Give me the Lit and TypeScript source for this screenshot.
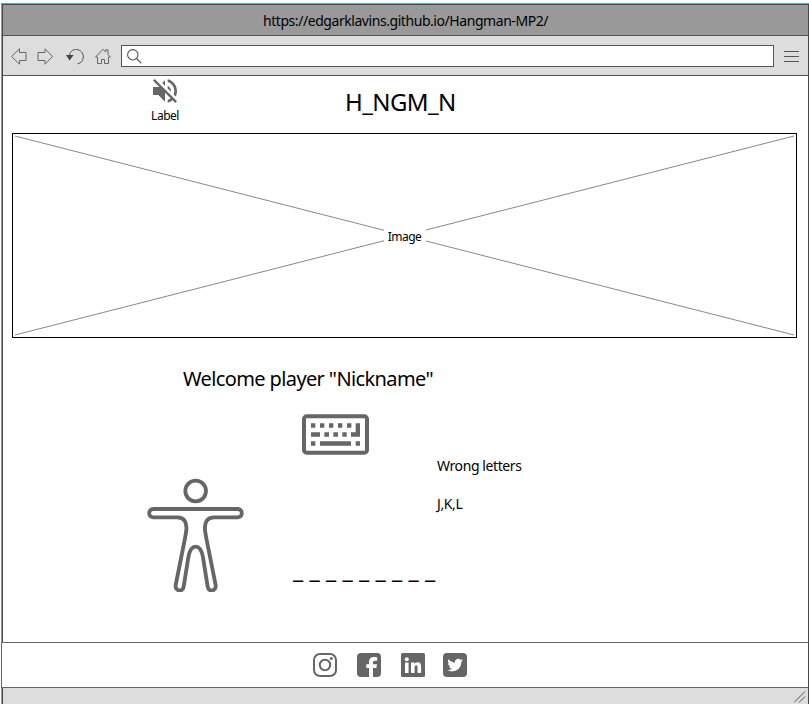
import { LitElement, html, css } from "lit";
import { customElement } from "lit/decorators.js";

const body = "M40 117H293a12.5 12.5 0 0 1 0 25H222C202 142 193 156 195 180Q196 190 199 205L227 345C230 364 206 368 203 350L189 262C185 240 177 230 167 230C157 230 149 240 145 262L131 350C128 368 104 364 107 345L135 205Q138 190 139 180C141 156 132 142 112 142H40a12.5 12.5 0 0 1 0 -25Z";

@customElement("browser-toolbar")
class BrowserToolbar extends LitElement {
  static styles = css`
    :host { display: flex; align-items: flex-start; height: 39px; background: #ddd; border-bottom: 1px solid #555; }
    svg { display: block; flex: none; fill: none; stroke: #666; stroke-width: 1; }
    .nav { display: flex; width: 118px; box-sizing: border-box; padding: 12px 0 0 8px; }
    .forward { margin-left: 10px; }
    .undo { margin-left: 13px; stroke: #555; }
    .home { margin-left: 10px; }
    .arrowhead { fill: #444; stroke: none; }
    .address { box-sizing: border-box; width: 653px; height: 22px; margin-top: 9px; border: 1px solid #555; background: #fff; padding: 3px 0 0 5px; }
    .address svg { stroke: #555; stroke-width: 1.1; }
    .menu { margin: 15px 0 0 10px; shape-rendering: crispEdges; stroke: #555; }
  `;
  render() {
    return html`
      <div class="nav">
        <svg width="16" height="17"><path d="M.5 8.5L8.5 .8V4.5H15V12.5H8.5V16.2Z" /></svg>
        <svg class="forward" width="16" height="17"><path d="M15.5 8.5L8 .8V4.5H1V12.5H8V16.2Z" /></svg>
        <svg class="undo" width="19" height="17"><path d="M3.5 7C4.5 3 7.5 1.2 10.5 1.5C14.5 1.8 17.5 5 17.3 9C17 12.5 15 15.5 11.5 15.8" /><path class="arrowhead" d="M0 7H7.6L3.6 12.5Z" /></svg>
        <svg class="home" width="16" height="17"><path d="M.6 9L8 1.2L10.7 4V1.8H13V6.5L15.4 9H13.5V15.5H9.5V11.5H6.5V15.5H2.5V9Z" /></svg>
      </div>
      <div class="address"><svg width="15" height="15"><circle cx="5.8" cy="5.8" r="5.2" /><path d="M9.5 9.5L14.3 14.3" /></svg></div>
      <svg class="menu" width="15" height="12"><path d="M0 .5H15M0 5.5H15M0 10.5H15" /></svg>
    `;
  }
}

@customElement("social-links")
class SocialLinks extends LitElement {
  static styles = css`
    :host { display: flex; padding: 10px 0 0 311px; height: 34px; }
    svg { display: block; flex: none; fill: #666; margin-right: 20px; }
    .twitter { margin-left: -2px; }
    .cut { fill: #fff; }
    .line { fill: none; stroke: #666; stroke-width: 2; }
  `;
  render() {
    return html`
      <svg width="24" height="24"><rect class="line" x="1" y="1" width="22" height="22" rx="6" /><circle class="line" cx="12" cy="12" r="5.2" /><circle cx="18.3" cy="5.6" r="1.5" /></svg>
      <svg width="24" height="24"><rect width="24" height="24" rx="4" /><path class="cut" d="M12 24V15H9.3V11.2H12V9.2C12 5.8 13.8 4.1 16.8 4.1C18.2 4.1 19.3 4.2 20.2 4.4V7.8H18C16.4 7.8 16 8.5 16 9.8V11.2H20L19.4 15H16V24Z" /></svg>
      <svg width="24" height="24"><rect width="24" height="24" rx="1.5" /><circle class="cut" cx="5.8" cy="6.2" r="2" /><path class="cut" d="M4 9.5H7.6V20H4ZM10 9.5H13.4V11C14 9.9 15.2 9.2 16.6 9.2C19.4 9.2 20.1 11.2 20.1 13.9V20H16.5V14.6C16.5 13.2 16.3 12.2 15.2 12.2C13.9 12.2 13.6 13.3 13.6 14.5V20H10Z" /></svg>
      <svg class="twitter" width="24" height="24"><rect width="24" height="24" rx="4" /><path class="cut" transform="translate(4.3 4.3) scale(.65)" d="M23.953 4.57a10 10 0 01-2.825.775 4.958 4.958 0 002.163-2.723c-.951.555-2.005.959-3.127 1.184a4.92 4.92 0 00-8.384 4.482C7.69 8.095 4.067 6.13 1.64 3.162a4.822 4.822 0 00-.666 2.475c0 1.71.87 3.213 2.188 4.096a4.904 4.904 0 01-2.228-.616v.06a4.923 4.923 0 003.946 4.827 4.996 4.996 0 01-2.212.085 4.936 4.936 0 004.604 3.417 9.867 9.867 0 01-6.102 2.105c-.39 0-.779-.023-1.17-.067a13.995 13.995 0 007.557 2.209c9.053 0 13.998-7.496 13.998-13.985 0-.21 0-.42-.015-.63A9.935 9.935 0 0024 4.59z" /></svg>
    `;
  }
}

@customElement("app-root")
class AppRoot extends LitElement {
  static styles = css`
    :host { display: block; box-sizing: border-box; width: 809px; height: 704px; padding: 3px 0 0 1px; overflow: hidden; background: #fdfdfb; color: #000; font-family: "Noto Sans", "Open Sans", sans-serif; }
    svg { display: block; }
    .window { box-sizing: border-box; height: 701px; border-top: 1px solid #48b4c4; border-left: 1px solid #48b4c4; }
    .frame { box-sizing: border-box; height: 700px; border: 1px solid #484848; border-bottom: 0; background: #fff; }
    .title { height: 30px; border-bottom: 1px solid #555; background: #999; line-height: 31px; font-size: 14px; text-align: center; letter-spacing: -.44px; white-space: nowrap; }
    .top { display: flex; height: 57px; }
    .sound { width: 60px; margin-left: 132px; padding-top: 3px; text-align: center; font-size: 12px; line-height: 16px; letter-spacing: -.5px; }
    .sound svg { margin: 0 auto 5px; fill: #666; }
    h1 { margin: 10px 0 0 150px; font-size: 24px; line-height: 32px; font-weight: 400; white-space: nowrap; letter-spacing: -.6px; }
    .image { box-sizing: border-box; width: 785px; height: 205px; margin-left: 9px; border: 1px solid #000; display: grid; place-items: center; }
    .image > * { grid-area: 1 / 1; }
    .image svg { stroke: #888; }
    .caption { z-index: 1; background: #fff; width: 42px; height: 16px; font-size: 12px; line-height: 18px; text-align: center; letter-spacing: -.5px; }
    .game { height: 304px; box-sizing: border-box; padding: 27px 0 0 144px; }
    h2 { margin: 0 0 -1px 36px; font-size: 20px; line-height: 28px; font-weight: 400; letter-spacing: -.62px; white-space: nowrap; }
    .board { display: grid; grid-template-columns: 146px 144px auto; }
    .figure { padding-top: 86px; }
    .figure svg { fill: none; stroke: #666; stroke-width: 11.5; }
    .keyboard { margin: 22px 0 0 9px; fill: #666; }
    .word { margin-top: 98px; font-size: 23px; line-height: 32px; letter-spacing: .15px; white-space: nowrap; }
    .wrong { padding-top: 64px; font-size: 14px; line-height: 20px; letter-spacing: -.4px; }
    .wrong p { margin: 0 0 18px; }
    .footer { box-sizing: border-box; height: 46px; margin-left: -2px; border: solid #666; border-width: 1px 0 1px 1px; background: #fff; }
    .status { display: flex; justify-content: flex-end; height: 16px; background: #ddd; }
    .grip { stroke: #555; margin: 2px 2px 0 0; }
  `;
  render() {
    return html`
      <div class="window"><div class="frame">
        <div class="title">https://edgarklavins.github.io/Hangman-MP2/</div>
        <browser-toolbar></browser-toolbar>
        <div class="top">
          <div class="sound">
            <svg width="24" height="24" viewBox="3 3 18 18"><path d="M16.5 12c0-1.77-1.02-3.29-2.5-4.03v2.21l2.45 2.45c.03-.2.05-.41.05-.63zm2.5 0c0 .94-.2 1.82-.54 2.64l1.51 1.51C20.63 14.91 21 13.5 21 12c0-4.28-2.99-7.86-7-8.77v2.06c2.89.86 5 3.54 5 6.71zM4.27 3L3 4.27 7.73 9H3v6h4l5 5v-6.73l4.25 4.25c-.67.52-1.42.93-2.25 1.18v2.06c1.38-.31 2.63-.95 3.69-1.81L19.73 21 21 19.73l-9-9L4.27 3zM12 4L9.91 6.09 12 8.18V4z" /></svg>
            Label
          </div>
          <h1>H_NGM_N</h1>
        </div>
        <div class="image">
          <svg width="783" height="203"><path d="M2 2L781 201M781 2L2 201" /></svg>
          <div class="caption">Image</div>
        </div>
        <div class="game">
          <h2>Welcome player "Nickname"</h2>
          <div class="board">
            <div class="figure"><svg width="97" height="114" viewBox="21 24 291 342"><circle cx="167" cy="63" r="31" /><path d=${body} /></svg></div>
            <div>
              <svg class="keyboard" width="67" height="41" viewBox="36 42 201 123"><rect x="42" y="49" width="189" height="109" rx="8" fill="none" stroke="#666" stroke-width="12" /><path d="M63 70h13v13h-13zM90 70h13v13h-13zM117 70h13v13h-13zM144 70h13v13h-13zM171 70h13v13h-13zM197 70h13v40h-27v-13h14zM63 97h27v13h-27zM103 97h14v13h-14zM130 97h14v13h-14zM157 97h13v13h-13zM63 124h13v13h-13zM90 124h93v13h-93zM197 124h13v13h-13z" /></svg>
              <div class="word">_ _ _ _ _ _ _ _ _</div>
            </div>
            <div class="wrong"><p>Wrong letters</p><p>J,K,L</p></div>
          </div>
        </div>
        <div class="footer"><social-links></social-links></div>
        <div class="status"><svg class="grip" width="12" height="13"><path d="M0 12.5L11 1.5M5 12.5L11 6.5" /></svg></div>
      </div></div>
    `;
  }
}
